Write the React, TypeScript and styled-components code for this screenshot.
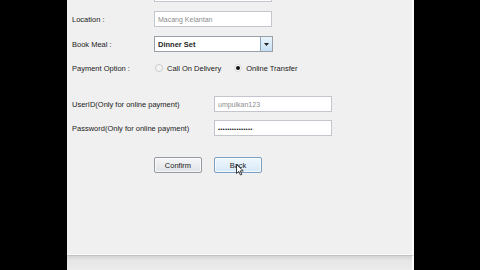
import React from "react";
import styled, { createGlobalStyle } from "styled-components";

const Global = createGlobalStyle`
  html, body { margin: 0; padding: 0; background: #000; }
  body { width: 480px; height: 270px; overflow: hidden; font-family: "Liberation Sans", Arial, sans-serif; }
`;

const Screen = styled.div`
  width: 480px;
  height: 270px;
  display: flex;
  background: #000;
`;

const Window = styled.div`
  margin-left: 67px;
  width: 347px;
  height: 270px;
  display: flex;
  flex-direction: column;
  position: relative;
`;

const Content = styled.div`
  height: 255px;
  background: #f0f0f0;
  border-right: 2px solid #fbfbfb;
  box-sizing: border-box;
  overflow: hidden;
  border-bottom: 1px solid #fafafa;
`;

const Form = styled.div`
  margin-top: -14px;
  padding-left: 5px;
  display: flex;
  flex-direction: column;
`;

const Row = styled.div<{ $gap: number }>`
  margin-top: ${(p) => p.$gap}px;
  height: 16px;
  display: grid;
  grid-template-columns: 82px auto;
  align-items: center;
`;

const WideRow = styled(Row)`
  grid-template-columns: 142px auto;
`;

const Label = styled.span`
  font-size: 7.5px;
  color: #1b1b1b;
  white-space: nowrap;
`;

const Field = styled.div<{ $w: number }>`
  width: ${(p) => p.$w}px;
  height: 16px;
  box-sizing: border-box;
  border: 1px solid #c3c6cc;
  background: #fff;
  font-size: 7px;
  color: #8d8d8d;
  padding-left: 3px;
  display: flex;
  align-items: center;
`;

const Dots = styled.span`
  color: #222;
  font-size: 6px;
  letter-spacing: 0.2px;
  margin-top: 1px;
`;

const Combo = styled.div`
  width: 119px;
  height: 16px;
  box-sizing: border-box;
  border: 1px solid #9aa0a8;
  background: #fff;
  display: flex;
  align-items: stretch;
`;

const ComboText = styled.span`
  flex: 1;
  font-size: 7.5px;
  font-weight: bold;
  color: #1e1e1e;
  padding-left: 3px;
  display: flex;
  align-items: center;
`;

const ComboButton = styled.div`
  width: 11px;
  border-left: 1px solid #8aa4c0;
  background: linear-gradient(#eaf4fc, #c6dff3);
  display: flex;
  align-items: center;
  justify-content: center;
`;

const RadioGroup = styled.div`
  display: flex;
  align-items: center;
`;

const RadioItem = styled.div<{ $ml: number }>`
  display: flex;
  align-items: center;
  margin-left: ${(p) => p.$ml}px;
  font-size: 7.5px;
  color: #1b1b1b;
  white-space: nowrap;
`;

const RadioCircle = styled.span<{ $on?: boolean }>`
  width: 8px;
  height: 8px;
  border-radius: 50%;
  box-sizing: border-box;
  border: 1px solid ${(p) => (p.$on ? "#d8d8d8" : "#c9ccd0")};
  background: ${(p) => (p.$on ? "#fff" : "#f4f4f4")};
  display: flex;
  align-items: center;
  justify-content: center;
  margin-right: 4px;
  &::after {
    content: "";
    width: 4px;
    height: 4px;
    border-radius: 50%;
    background: ${(p) => (p.$on ? "#111" : "transparent")};
  }
`;

const ButtonRow = styled.div`
  margin-top: 21px;
  padding-left: 82px;
  display: flex;
  gap: 12px;
  height: 16px;
`;

const Button = styled.div<{ $hover?: boolean }>`
  width: 48px;
  height: 16px;
  box-sizing: border-box;
  border: 1px solid ${(p) => (p.$hover ? "#7a9fc2" : "#959aa0")};
  border-radius: 2px;
  background: ${(p) =>
    p.$hover ? "linear-gradient(#eef7fd, #d6e9f6)" : "linear-gradient(#f4f5f6, #e0e4e8)"};
  font-size: 7.5px;
  color: #1b1b1b;
  display: flex;
  align-items: center;
  justify-content: center;
  box-shadow: inset 0 0 0 1px rgba(255, 255, 255, 0.7);
`;

const Bottom = styled.div`
  flex: 1;
  border-top: 1px solid #c2c2c2;
  background: linear-gradient(#d4d4d4, #e6e6e6 30%, #ececec);
  border-right: 2px solid #fbfbfb;
`;

const Cursor = styled.svg`
  position: absolute;
  left: 169px;
  top: 164px;
`;

export default function App() {
  return (
    <>
      <Global />
      <Screen>
        <Window>
          <Content>
            <Form>
              <Row $gap={0}>
                <Label></Label>
                <Field $w={118} />
              </Row>
              <Row $gap={9}>
                <Label>Location :</Label>
                <Field $w={118}>Macang Kelantan</Field>
              </Row>
              <Row $gap={9}>
                <Label>Book Meal :</Label>
                <Combo>
                  <ComboText>Dinner Set</ComboText>
                  <ComboButton>
                    <svg width="5" height="3" viewBox="0 0 5 3">
                      <path d="M0 0 H5 L2.5 3 Z" fill="#222" />
                    </svg>
                  </ComboButton>
                </Combo>
              </Row>
              <Row $gap={8}>
                <Label>Payment Option :</Label>
                <RadioGroup>
                  <RadioItem $ml={1}>
                    <RadioCircle />
                    Call On Delivery
                  </RadioItem>
                  <RadioItem $ml={13}>
                    <RadioCircle $on />
                    Online Transfer
                  </RadioItem>
                </RadioGroup>
              </Row>
              <WideRow $gap={20}>
                <Label>UserID(Only for online payment)</Label>
                <Field $w={118}>umpulkan123</Field>
              </WideRow>
              <WideRow $gap={8}>
                <Label>Password(Only for online payment)</Label>
                <Field $w={118}>
                  <Dots>•••••••••••••••</Dots>
                </Field>
              </WideRow>
              <ButtonRow>
                <Button>Confirm</Button>
                <Button $hover>Back</Button>
              </ButtonRow>
            </Form>
          </Content>
          <Bottom />
          <Cursor width="8" height="12" viewBox="0 0 8 12">
            <path d="M0.5 0.5 L0.5 9.5 L2.8 7.4 L4.4 11 L5.8 10.4 L4.3 6.9 L7.3 6.9 Z" fill="#fff" stroke="#111" strokeWidth="0.8" />
          </Cursor>
        </Window>
      </Screen>
    </>
  );
}
